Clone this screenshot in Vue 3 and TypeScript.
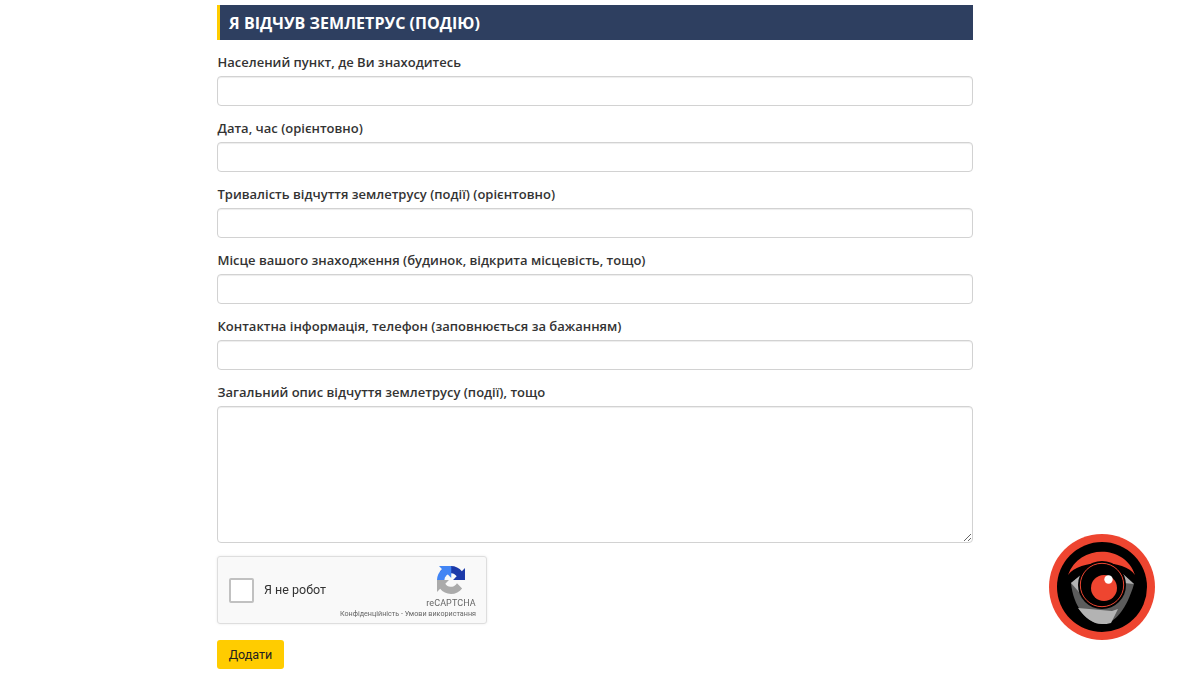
<script setup lang="ts">
const fields: string[] = [
  'Населений пункт, де Ви знаходитесь',
  'Дата, час (орієнтовно)',
  'Тривалість відчуття землетрусу (події) (орієнтовно)',
  'Місце вашого знаходження (будинок, відкрита місцевість, тощо)',
  'Контактна інформація, телефон (заповнюється за бажанням)',
]
</script>

<template>
  <div class="page">
    <main class="form">
      <h1 class="title">Я ВІДЧУВ ЗЕМЛЕТРУС (ПОДІЮ)</h1>
      <div v-for="f in fields" :key="f" class="field">
        <label class="label">{{ f }}</label>
        <input class="input" type="text" />
      </div>
      <div class="field">
        <label class="label">Загальний опис відчуття землетрусу (події), тощо</label>
        <textarea class="area"></textarea>
      </div>
      <div class="captcha">
        <span class="check"></span>
        <span class="robot">Я не робот</span>
        <div class="brand">
          <svg class="rc" viewBox="0 0 64 64" width="28" height="28">
            <path fill="#ababab" d="M.001 32.045l.033 1.37V59.314l7.16-7.16c5.86 7.173 14.774 11.754 24.76 11.754 10.4 0 19.622-4.96 25.458-12.64l-11.736-11.86a15.55 15.55 0 0 1-4.754 5.334c-2.05 1.6-4.952 2.906-8.968 2.906-.485 0-.86-.057-1.135-.163-4.976-.393-9.288-3.14-11.828-7.124l8.307-8.308-26.287-.005" />
            <path fill="#1c3aa9" d="M64 31.955l-.033-1.37V4.687l-7.16 7.16C50.948 4.674 42.033.093 32.05.093c-10.4 0-19.622 4.96-25.458 12.64l11.736 11.86a15.55 15.55 0 0 1 4.754-5.334c2.05-1.6 4.952-2.906 8.968-2.906.485 0 .86.057 1.135.163 4.976.393 9.288 3.14 11.828 7.124l-8.307 8.308 26.287.005" />
            <path fill="#4285f4" d="M31.862.094l-1.37.033H4.594l7.16 7.16C4.58 13.147 0 22.06 0 32.046l17 0c0-.485.057-.86.163-1.135.393-4.976 3.14-9.288 7.124-11.828l8.308 8.307.005-26.287" transform="translate(0 -0.1)" />
          </svg>
          <span class="rc-name">reCAPTCHA</span>
          <span class="rc-links">Конфіденційність - Умови використання</span>
        </div>
      </div>
      <button class="add" type="button">Додати</button>
    </main>
    <svg class="eye" viewBox="0 0 106 106" width="106" height="106">
      <circle cx="53" cy="53" r="53" fill="#ee4530" />
      <circle cx="53" cy="53" r="45" fill="#000" />
      <path d="M19 41C30 10 76 10 86 41C76 25 30 25 19 41Z" fill="#ee4530" />
      <path d="M22 49L33 40L74 40L85 50C78 74 66 90 53 90C38 90 24 72 22 49Z" fill="#5c5c5c" />
      <path d="M29 74L63 77L69 75L62 89C59 90 56 90 53 90C44 90 36 84 29 74Z" fill="#b3b3b3" />
      <path d="M22 49L33 40L30 58Z" fill="#b3b3b3" />
      <path d="M74 40L85 50L75 49Z" fill="#b3b3b3" />
      <circle cx="53" cy="51" r="24" fill="#000" />
      <circle cx="53" cy="51" r="21.7" fill="none" stroke="#ee4530" stroke-width="1" />
      <circle cx="55" cy="54" r="13" fill="#ee4530" />
      <circle cx="59.5" cy="45.5" r="4.2" fill="#fff" />
    </svg>
  </div>
</template>

<style>
html, body { margin: 0; background: #fff; }
</style>

<style scoped>
.page {
  position: relative;
  width: 1200px;
  height: 675px;
  overflow: hidden;
  box-sizing: border-box;
  padding: 5px 0 0 217px;
  font-family: "Open Sans", sans-serif;
  color: #333;
}
.form { width: 756px; }
.title {
  margin: 0 0 13px;
  height: 35px;
  box-sizing: border-box;
  padding-left: 9px;
  border-left: 3px solid #ffcc00;
  background: #2e3f60;
  color: #fff;
  font-size: 16px;
  font-weight: 700;
  line-height: 37px;
  letter-spacing: .04px;
}
.field { display: flex; flex-direction: column; margin-bottom: 13px; }
.label {
  font-size: 13px;
  font-weight: 600;
  line-height: 18px;
  margin-bottom: 5px;
  padding-left: .5px;
  color: #333;
}
.input, .area {
  display: block;
  width: 100%;
  box-sizing: border-box;
  border: 1px solid #d2d2d2;
  border-radius: 4px;
  background: #fff;
  box-shadow: inset 0 1px 1px rgba(0,0,0,.075);
  outline: none;
  margin: 0;
  padding: 0;
}
.input { height: 30px; }
.area { height: 137px; resize: vertical; }
.captcha {
  width: 270px;
  height: 68px;
  box-sizing: border-box;
  display: flex;
  align-items: center;
  padding: 0 10px 0 11px;
  background: #f9f9f9;
  border: 1px solid #dedede;
  border-radius: 3px;
  box-shadow: 0 0 3px rgba(0,0,0,.08);
  font-family: Roboto, sans-serif;
  will-change: transform;
}
.check {
  width: 25px;
  height: 25px;
  box-sizing: border-box;
  background: #fff;
  border: 2px solid #c1c1c1;
  border-radius: 2px;
  margin-right: 10px;
}
.robot { font-size: 12.5px; color: #333; margin-bottom: 1px; }
.brand {
  margin-left: auto;
  position: relative;
  align-self: stretch;
  width: 50px;
  display: flex;
  flex-direction: column;
  align-items: center;
}
.rc { margin-top: 9px; }
.rc-name { font-size: 9px; letter-spacing: .1px; color: #666; margin-top: 2px; line-height: 14px; }
.rc-links {
  position: absolute;
  right: 0;
  top: 52px;
  white-space: nowrap;
  font-size: 7.2px;
  line-height: 10px;
  color: #666;
}
.add {
  display: block;
  margin-top: 16px;
  width: 67px;
  height: 29px;
  border: 0;
  border-radius: 3px;
  background: #ffcc00;
  color: #222;
  font-family: Roboto, sans-serif;
  font-size: 12.5px;
  padding: 0;
}
.eye { position: absolute; left: 1049px; top: 534px; }
</style>
